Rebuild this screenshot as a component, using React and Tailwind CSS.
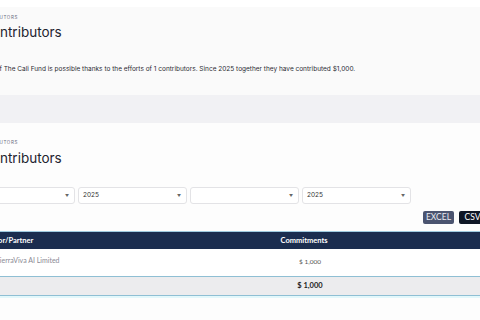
export default function App() {
  const selects = ['', '2025', '', '2025'];
  return (
    <div className="w-[480px] h-[320px] overflow-hidden bg-[#fdfdfd] font-['Inter',sans-serif] text-[#1f2430]">
      <div className="h-[7px] bg-white" />

      {/* panel 1 */}
      <section className="h-[88px] bg-[#fafafa] -ml-[18px]">
        <p className="pt-[8px] -ml-[7px] text-[4.5px] leading-[6px] tracking-[0.14em] text-[#6b6b80] uppercase">Contributors</p>
        <h1 className="mt-[2px] text-[13.5px] leading-[18px] font-normal">Contributors</h1>
        <p className="mt-[23px] ml-[13.5px] text-[6.5px] leading-[10px] text-[#2b2b33] whitespace-nowrap">
          of The Cali Fund is possible thanks to the efforts of 1 contributors. Since 2025 together they have contributed $1,000.
        </p>
      </section>

      <div className="h-[28px] bg-[#f1f1f4]" />

      {/* panel 2 */}
      <section className="bg-[#fdfdfd]">
        <div className="-ml-[18px]">
          <p className="pt-[17px] -ml-[7px] text-[4.5px] leading-[6px] tracking-[0.14em] text-[#6b6b80] uppercase">Contributors</p>
          <h2 className="mt-[3px] text-[13.5px] leading-[18px] font-normal">Contributors</h2>
        </div>

        <div className="mt-[20px] -ml-[34px] flex gap-[3px]">
          {selects.map((v, i) => (
            <div key={i} className="w-[109px] h-[17px] shrink-0 flex items-center justify-between pl-[4px] pr-[5px] bg-white border border-[#e3e3e6] rounded-[3px] text-[6.5px] text-[#333]">
              <span>{v}</span>
              <span className="text-[4px] text-[#666]">▼</span>
            </div>
          ))}
        </div>

        <div className="mt-[7px] flex justify-end gap-[5px] -mr-[6px] font-['Lato',sans-serif]">
          <span className="h-[13px] w-[31px] flex items-center justify-center rounded-[2px] bg-[#4b5470] text-[#e8eaf0] text-[8.5px]">EXCEL</span>
          <span className="h-[13px] w-[27px] flex items-center justify-center rounded-[2px] bg-[#0f1726] text-white text-[8.5px]">CSV</span>
        </div>

        {/* table */}
        <div className="mt-[7px] font-['Lato',sans-serif]">
          <div className="h-[18px] bg-[#1b2d4f] border-t border-[#9fcbe0] flex items-center text-white text-[7.5px] font-bold">
            <span className="-ml-[34px] w-[283px]">Contributor/Partner</span>
            <span className="w-[110px] text-center">Commitments</span>
          </div>
          <div className="h-[27px] bg-white flex text-[7px]">
            <span className="-ml-[4px] mt-[6px] w-[254px] text-[#8a8a95]">SierraViva AI Limited</span>
            <span className="mt-[8px] w-[120px] text-center text-[6.5px] text-[#555]">$ 1,000</span>
          </div>
          <div className="h-[20px] bg-[#ececee] border-y border-[#8fbfd4] flex items-center text-[7.5px] font-bold text-[#222]">
            <span className="w-[250px]" />
            <span className="w-[120px] text-center">$ 1,000</span>
          </div>
          <div className="h-[2px] bg-[#e3f8fb]" />
        </div>
      </section>
    </div>
  );
}
